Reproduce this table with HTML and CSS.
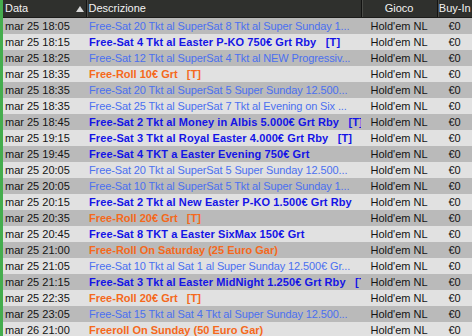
FILE: index.html
```html
<!DOCTYPE html>
<html lang="it">
<head>
<meta charset="utf-8">
<title>Tornei</title>
<link rel="stylesheet" href="styles.css">
</head>
<body>
<div class="panel">
<table class="grid">
<colgroup>
<col class="c-date"><col class="c-desc"><col class="c-game"><col class="c-buy">
</colgroup>
<thead>
<tr>
<th class="h-date">Data<span class="sort"></span></th>
<th class="h-desc">Descrizione</th>
<th class="h-game">Gioco</th>
<th class="h-buy">Buy-In</th>
</tr>
</thead>
<tbody>
<tr><td>mar 25 18:05</td><td class="d lite">Free-Sat 20 Tkt al SuperSat 8 Tkt al Super Sunday 1...</td><td class="g">Hold'em NL</td><td class="b">€0</td></tr>
<tr><td>mar 25 18:15</td><td class="d bold">Free-Sat 4 Tkt al Easter P-KO 750€ Grt Rby   [T]</td><td class="g">Hold'em NL</td><td class="b">€0</td></tr>
<tr><td>mar 25 18:25</td><td class="d lite">Free-Sat 12 Tkt al SuperSat 4 Tkt al NEW Progressiv...</td><td class="g">Hold'em NL</td><td class="b">€0</td></tr>
<tr><td>mar 25 18:35</td><td class="d roll">Free-Roll 10€ Grt   [T]</td><td class="g">Hold'em NL</td><td class="b">€0</td></tr>
<tr><td>mar 25 18:35</td><td class="d lite">Free-Sat 20 Tkt al SuperSat 5 Super Sunday 12.500...</td><td class="g">Hold'em NL</td><td class="b">€0</td></tr>
<tr><td>mar 25 18:35</td><td class="d lite">Free-Sat 25 Tkt al SuperSat 7 Tkt al Evening on Six ...</td><td class="g">Hold'em NL</td><td class="b">€0</td></tr>
<tr><td>mar 25 18:45</td><td class="d bold">Free-Sat 2 Tkt al Money in Albis 5.000€ Grt Rby   [T]</td><td class="g">Hold'em NL</td><td class="b">€0</td></tr>
<tr><td>mar 25 19:15</td><td class="d bold">Free-Sat 3 Tkt al Royal Easter 4.000€ Grt Rby   [T]</td><td class="g">Hold'em NL</td><td class="b">€0</td></tr>
<tr><td>mar 25 19:45</td><td class="d bold">Free-Sat 4 TKT a Easter Evening 750€ Grt</td><td class="g">Hold'em NL</td><td class="b">€0</td></tr>
<tr><td>mar 25 20:05</td><td class="d lite">Free-Sat 20 Tkt al SuperSat 5 Super Sunday 12.500...</td><td class="g">Hold'em NL</td><td class="b">€0</td></tr>
<tr><td>mar 25 20:05</td><td class="d lite">Free-Sat 10 Tkt al SuperSat 5 Tkt al Super Sunday 1...</td><td class="g">Hold'em NL</td><td class="b">€0</td></tr>
<tr><td>mar 25 20:15</td><td class="d bold">Free-Sat 2 Tkt al New Easter P-KO 1.500€ Grt Rby</td><td class="g">Hold'em NL</td><td class="b">€0</td></tr>
<tr><td>mar 25 20:35</td><td class="d roll">Free-Roll 20€ Grt   [T]</td><td class="g">Hold'em NL</td><td class="b">€0</td></tr>
<tr><td>mar 25 20:45</td><td class="d bold">Free-Sat 8 TKT a Easter SixMax 150€ Grt</td><td class="g">Hold'em NL</td><td class="b">€0</td></tr>
<tr><td>mar 25 21:00</td><td class="d roll">Free-Roll On Saturday (25 Euro Gar)</td><td class="g">Hold'em NL</td><td class="b">€0</td></tr>
<tr><td>mar 25 21:05</td><td class="d lite">Free-Sat 10 Tkt al Sat 1 al Super Sunday 12.500€ Gr...</td><td class="g">Hold'em NL</td><td class="b">€0</td></tr>
<tr><td>mar 25 21:15</td><td class="d bold">Free-Sat 3 Tkt al Easter MidNight 1.250€ Grt Rby   [T]</td><td class="g">Hold'em NL</td><td class="b">€0</td></tr>
<tr><td>mar 25 22:35</td><td class="d roll">Free-Roll 20€ Grt   [T]</td><td class="g">Hold'em NL</td><td class="b">€0</td></tr>
<tr><td>mar 25 23:05</td><td class="d lite">Free-Sat 15 Tkt al Sat 4 Tkt al Super Sunday 12.500...</td><td class="g">Hold'em NL</td><td class="b">€0</td></tr>
<tr><td>mar 26 21:00</td><td class="d roll">Freeroll On Sunday (50 Euro Gar)</td><td class="g">Hold'em NL</td><td class="b">€0</td></tr>
</tbody>
</table>
</div>
</body>
</html>
```
FILE: styles.css
```css
html, body {
  margin: 0;
  padding: 0;
  background: #e0e0e0;
  overflow: hidden;
}
.panel {
  width: 469px;
  height: 336px;
  border-left: 3px solid #45ad4e;
  overflow: hidden;
}
.grid {
  width: 469px;
  table-layout: fixed;
  border-collapse: collapse;
  font-family: "Liberation Sans", Arial, sans-serif;
  font-size: 11px;
}
.c-date { width: 83px; }
.c-desc { width: 275px; }
.c-game { width: 76px; }
.c-buy { width: 35px; }
thead th {
  height: 17px;
  padding: 0;
  background: #2f302d;
  color: #f2f2f2;
  font-weight: normal;
  line-height: 17px;
  border-bottom: 1px solid #1c1c1a;
  white-space: nowrap;
  overflow: hidden;
}
.h-date {
  text-align: left;
  padding-left: 2px;
  position: relative;
}
.h-desc, .h-game, .h-buy {
  border-left: 1px solid #121211;
  box-shadow: inset 1px 0 0 #4a4b47;
}
.h-desc { text-align: left; padding-left: 2px; }
.h-game, .h-buy { text-align: center; }
.sort {
  position: absolute;
  left: 73px;
  top: 6px;
  width: 0;
  height: 0;
  border-left: 4px solid transparent;
  border-right: 4px solid transparent;
  border-bottom: 6px solid #d8d8d8;
}
tbody td {
  height: 16px;
  padding: 0;
  line-height: 16px;
  color: #141414;
  white-space: pre;
  overflow: hidden;
}
tbody td:first-child { padding-left: 2px; }
tbody tr:nth-child(odd) td { background: #bababa; }
tbody tr:nth-child(even) td { background: #e1e1e1; }
.d { padding-left: 3px; }
.lite { color: #4b70f0 !important; letter-spacing: -0.12px; }
.bold { color: #1414e6 !important; font-weight: bold; letter-spacing: 0.1px; }
.roll { color: #f5691c !important; font-weight: bold; }
.g, .b { text-align: center; }
```
